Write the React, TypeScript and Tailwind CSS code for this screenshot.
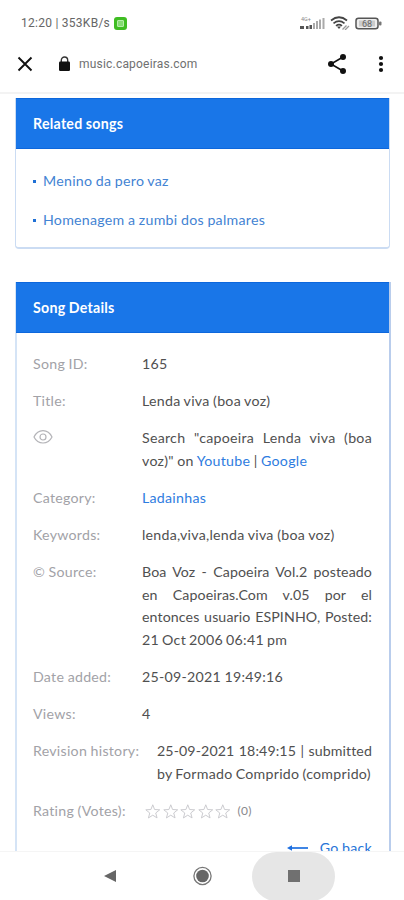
import type { ReactNode } from 'react';

interface RowProps {
  label: ReactNode;
  children: ReactNode;
  className?: string;
}

const RELATED = ['Menino da pero vaz', 'Homenagem a zumbi dos palmares'];

function StatusBar() {
  return (
    <div className="flex h-[35px] shrink-0 items-center pt-[11px] pl-[21px] pr-[22px] font-[Roboto,sans-serif] text-[12px] text-[#666]">
      <span className="w-[90px] whitespace-nowrap tracking-[0.26px]">12:20 | 353KB/s</span>
      <span className="ml-[3px] flex h-[13px] w-[13px] items-center justify-center rounded-[3px] bg-[#3fbd22]">
        <span className="h-[7px] w-[7px] rounded-[1px] border border-[#b6edaa] bg-[#86dc73]" />
      </span>
      <svg className="ml-auto" width="26" height="14" viewBox="0 0 26 14">
        <text x="1" y="5" fontSize="5.5" fill="#888">4G+</text>
        <g fill="#555">
          <rect x="0" y="10" width="4" height="3" />
          <rect x="6" y="10" width="2.5" height="3" />
          <rect x="9.5" y="9" width="2.5" height="4" />
        </g>
        <g fill="#aaa">
          <rect x="13" y="7" width="2" height="6" />
          <rect x="16" y="5" width="2" height="8" />
          <rect x="19" y="3.5" width="2" height="9.5" />
          <rect x="22.5" y="2" width="2" height="11" />
        </g>
      </svg>
      <svg className="ml-[4px]" width="20" height="14" viewBox="0 0 20 14" fill="none" stroke="#444" strokeWidth="1.7">
        <path d="M1 4.5Q9 -2 17 4.5M3.5 7.3Q9 2.8 14.5 7.3M6 9.8Q9 7.5 12 9.8" />
        <path d="M7 10.5h4L9 13z" fill="#444" stroke="none" />
        <path d="M12.5 13.5l4-4M15 14l4-4" stroke="#999" strokeWidth="1.3" />
      </svg>
      <svg className="ml-[5px]" width="27" height="13" viewBox="0 0 27 13">
        <rect x="1" y="1.2" width="22" height="10.6" rx="2.5" fill="#eee" stroke="#555" strokeWidth="1.5" />
        <rect x="4" y="3.5" width="16" height="6" fill="#ccc" />
        <rect x="24" y="4.5" width="2.5" height="4" rx="1" fill="#777" />
        <text x="12" y="9.8" textAnchor="middle" fontSize="9" fill="#666">68</text>
      </svg>
    </div>
  );
}

function BrowserBar() {
  return (
    <div className="flex h-[59px] shrink-0 items-center border-b-2 border-[#f3f3f3] pl-[17px]">
      <svg width="16" height="16" viewBox="0 0 16 16" fill="none" stroke="#111" strokeWidth="1.9">
        <path d="M1.5 1.5l13 13M14.5 1.5l-13 13" />
      </svg>
      <svg className="ml-[25px]" width="13" height="16" viewBox="0 0 13 16">
        <path d="M3.3 6V4.2a3.2 3.2 0 0 1 6.4 0V6" fill="none" stroke="#333" strokeWidth="1.4" />
        <rect x="1" y="5.5" width="11" height="9.5" rx="1.2" fill="#111" />
      </svg>
      <span className="ml-[8px] w-[120px] whitespace-nowrap pt-px font-[Roboto,sans-serif] text-[12px] tracking-[0.2px] text-[#707070]">
        music.capoeiras.com
      </span>
      <svg className="ml-[128px]" width="20" height="22" viewBox="0 0 20 22" fill="#111">
        <path d="M16 4L4 11L16 18" fill="none" stroke="#111" strokeWidth="1.6" />
        <circle cx="16" cy="4" r="3" />
        <circle cx="4" cy="11" r="3" />
        <circle cx="16" cy="18" r="3" />
      </svg>
      <svg className="ml-[31px]" width="6" height="18" viewBox="0 0 6 18" fill="#111">
        <circle cx="3" cy="3" r="2.1" />
        <circle cx="3" cy="9" r="2.1" />
        <circle cx="3" cy="15" r="2.1" />
      </svg>
    </div>
  );
}

function PanelTitle({ children, className = '' }: { children: ReactNode; className?: string }) {
  return (
    <h2 className={`flex h-[51px] items-center border-y border-[#0d67dc] bg-[#1976e8] pt-[2px] pl-[17px] font-bold text-white ${className}`}>
      {children}
    </h2>
  );
}

function Row({ label, children, className = 'w-[230px]' }: RowProps) {
  return (
    <div className="mb-[14.25px] flex justify-between">
      <div className="shrink-0 whitespace-nowrap text-[#a2a2a7]">{label}</div>
      <div className={`${className} shrink-0 text-justify text-[#505050]`}>{children}</div>
    </div>
  );
}

function Star() {
  return (
    <svg width="17.5" height="17" viewBox="0 0 24 24" fill="none" stroke="#cacace" strokeWidth="1.4">
      <path d="M12 2.5l2.6 6.7 7.2.4-5.6 4.5 1.9 7-6.1-3.9-6.1 3.9 1.9-7L2.2 9.6l7.2-.4z" />
    </svg>
  );
}

function NavBar() {
  return (
    <div className="flex h-[49px] shrink-0 items-center border-t border-[#f5f5f5] bg-white">
      <svg className="ml-[103px]" width="14" height="14" viewBox="0 0 14 14">
        <path d="M1 7L13 1v12z" fill="#666" />
      </svg>
      <svg className="ml-[75px]" width="20" height="20" viewBox="0 0 20 20">
        <circle cx="10.5" cy="10" r="8.6" fill="none" stroke="#777" strokeWidth="1.3" />
        <circle cx="10.5" cy="10" r="6.3" fill="#666" />
      </svg>
      <div className="ml-[40px] flex h-[49px] w-[83px] items-center justify-center rounded-full bg-[#e6e6e6]">
        <div className="h-[12px] w-[12px] bg-[#707070]" />
      </div>
    </div>
  );
}

export default function App() {
  return (
    <div className="flex h-[900px] w-[404px] flex-col overflow-hidden bg-white">
      <StatusBar />
      <BrowserBar />

      <main className="min-h-0 flex-1 overflow-hidden pt-[4px] pl-[15px] pr-[13px] font-[Lato,sans-serif] text-[14.2px] leading-[22.75px] tracking-[0.26px] [word-spacing:-0.4px]">
        <section className="mr-px h-[151px] rounded-b-[4px] border-x border-b-2 border-[#cbdcf3]">
          <PanelTitle>Related songs</PanelTitle>
          <ul className="pt-[21px] pl-[17px] text-[#4383d3]">
            {RELATED.map(song => (
              <li key={song} className="mb-[16.25px] flex items-center">
                <span className="mr-[7px] h-[3px] w-[3px] bg-[#1f70d5]" />
                {song}
              </li>
            ))}
          </ul>
        </section>

        <section className="mt-[33px] border-l-2 border-r-2 border-l-[#d5e4f6] border-r-[#b9cdec]">
          <PanelTitle className="-ml-px">Song Details</PanelTitle>
          <div className="pt-[20px] pl-[16px] pr-[17px]">
            <Row label="Song ID:">165</Row>
            <Row label="Title:">Lenda viva (boa voz)</Row>
            <Row
              label={
                <svg className="mt-[2px]" width="20" height="16" viewBox="0 0 20 16" fill="none" stroke="#b4b4b8" strokeWidth="1.2">
                  <path d="M1 8C5 -.5 15 -.5 19 8C15 16 5 16 1 8z" />
                  <circle cx="10" cy="8" r="3" />
                </svg>
              }
            >
              Search "capoeira Lenda viva (boa voz)" on <span className="text-[#2e7ce0]">Youtube</span> | <span className="text-[#2e7ce0]">Google</span>
            </Row>
            <Row label="Category:"><span className="text-[#2e7ce0]">Ladainhas</span></Row>
            <Row label="Keywords:">lenda,viva,lenda viva (boa voz)</Row>
            <Row label="© Source:" className="w-[230px] tracking-[0.1px] [word-spacing:-0.8px]">
              Boa Voz - Capoeira Vol.2 posteado en Capoeiras.Com v.05 por el entonces usuario ESPINHO, Posted:{' '}
              <span className="tracking-[0.26px]">21 Oct 2006 06:41 pm</span>
            </Row>
            <Row label="Date added:">25-09-2021 19:49:16</Row>
            <Row label="Views:">4</Row>
            <Row label="Revision history:" className="w-[215px] tracking-[0.1px] [word-spacing:-0.8px]">
              25-09-2021 18:49:15 | submitted{' '}
              <span className="tracking-[0.27px]">by Formado Comprido (comprido)</span>
            </Row>
            <Row label="Rating (Votes):">
              <div className="flex h-[22.75px] items-center pl-[2px]">
                <Star />
                <Star />
                <Star />
                <Star />
                <Star />
                <span className="ml-[6px] text-[12px] text-[#88888c]">(0)</span>
              </div>
            </Row>
            <div className="flex items-center justify-end text-[#2874d8]">
              <svg className="mr-[12px]" width="21" height="8" viewBox="0 0 21 8">
                <path d="M3 4h18" stroke="#1d6fe0" strokeWidth="1.7" />
                <path d="M0 4l5-2.7v5.4z" fill="#1d6fe0" />
              </svg>
              Go back
            </div>
          </div>
        </section>
      </main>

      <NavBar />
    </div>
  );
}
